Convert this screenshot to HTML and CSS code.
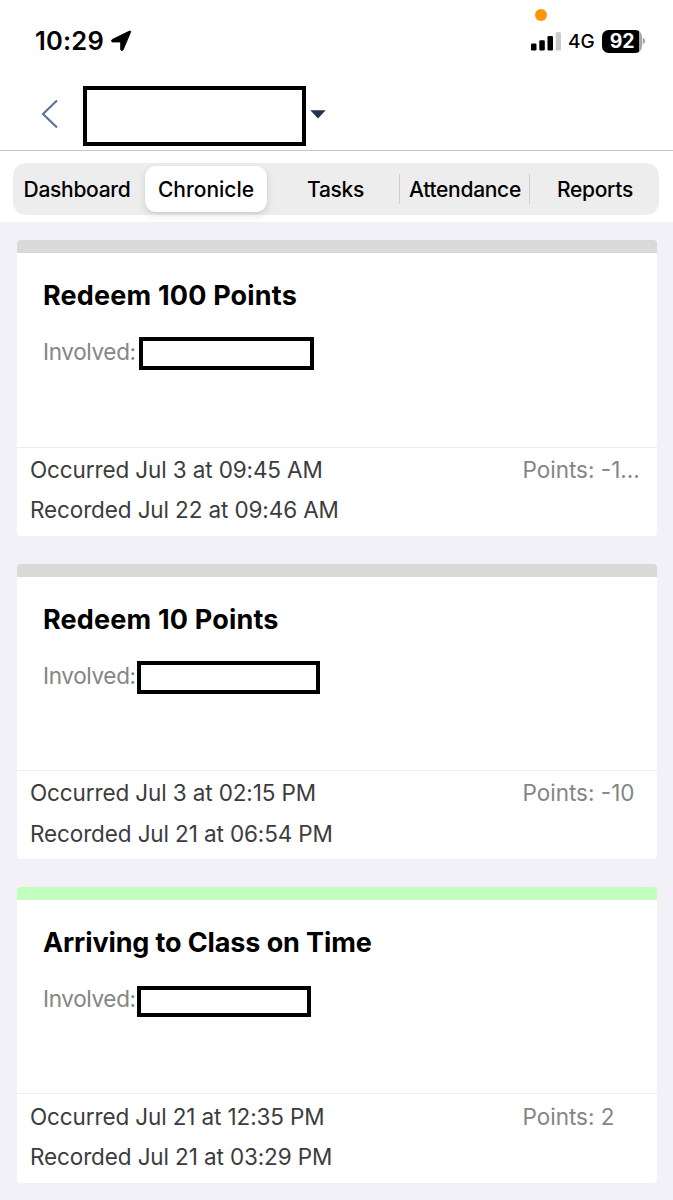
FILE: index.html
```html
<!DOCTYPE html>
<html lang="en">
<head>
<meta charset="utf-8">
<title>Chronicle</title>
<link rel="stylesheet" href="styles.css">
</head>
<body>
<header class="top">
  <div class="status">
    <div class="clock">
      <span class="time">10:29</span>
      <svg class="location" width="22" height="22" viewBox="0 0 22 22"><path d="M20.600 2.200 13.200 19.800c-.6 1.200-2.600.9-2.600-.5V12H2.800C1.200 12 .9 10.100 2.200 9.500L19.400 1.100c1-.5 1.700.1 1.200 1.100Z" stroke="#000" stroke-width=".8" stroke-linejoin="round"/></svg>
    </div>
    <div class="indicators">
      <span class="mic-dot"></span>
      <svg class="signal" width="30" height="20" viewBox="0 0 30 20"><rect x="0" y="12.500" width="5.500" height="7" rx="1.200"/><rect x="8.300" y="9.300" width="5.500" height="10.200" rx="1.200"/><rect x="16.500" y="5" width="5.500" height="14.500" rx="1.200"/><rect x="24.700" y="1.200" width="5.300" height="18.300" rx="1.200" fill="#cacaca"/></svg>
      <span class="network">4G</span>
      <span class="battery"><span class="level">92</span></span>
      <svg class="cap" width="4" height="8" viewBox="0 0 4 8"><path d="M.7.5Q3.300 1.800 3.300 4T.7 7.500Z" fill="#aaa"/></svg>
    </div>
  </div>
  <div class="nav">
    <svg class="back" width="18" height="30" viewBox="0 0 18 30"><path d="M16 1.500 2 15l14 13.500" fill="none" stroke="#5d7192" stroke-width="2.100"/></svg>
    <div class="student"></div>
    <svg class="caret" width="16" height="9" viewBox="0 0 16 9"><path d="M.3.300h15.400L8 8.500Z" fill="#1f3355"/></svg>
  </div>
</header>
<nav class="tabs-wrap">
  <div class="tabs">
    <span class="tab">Dashboard</span>
    <span class="tab active">Chronicle</span>
    <span class="tab">Tasks</span>
    <span class="tab divided">Attendance</span>
    <span class="tab divided">Reports</span>
  </div>
</nav>
<main class="feed">
  <article class="card">
    <div class="body">
      <h2 class="title">Redeem 100 Points</h2>
      <div class="involved"><span class="label">Involved:</span><span class="name first"></span></div>
    </div>
    <footer class="meta">
      <div class="dates"><span>Occurred Jul 3 at 09:45 AM</span><span>Recorded Jul 22 at 09:46 AM</span></div>
      <span class="points">Points: -1...</span>
    </footer>
  </article>
  <article class="card">
    <div class="body">
      <h2 class="title">Redeem 10 Points</h2>
      <div class="involved"><span class="label">Involved:</span><span class="name second"></span></div>
    </div>
    <footer class="meta">
      <div class="dates"><span>Occurred Jul 3 at 02:15 PM</span><span>Recorded Jul 21 at 06:54 PM</span></div>
      <span class="points">Points: -10</span>
    </footer>
  </article>
  <article class="card positive">
    <div class="body">
      <h2 class="title">Arriving to Class on Time</h2>
      <div class="involved"><span class="label">Involved:</span><span class="name third"></span></div>
    </div>
    <footer class="meta">
      <div class="dates"><span>Occurred Jul 21 at 12:35 PM</span><span>Recorded Jul 21 at 03:29 PM</span></div>
      <span class="points">Points: 2</span>
    </footer>
  </article>
</main>
</body>
</html>
```
FILE: styles.css
```css
* { box-sizing: border-box; }
body {
  margin: 0;
  height: 1200px;
  overflow: hidden;
  background: #f2f1f7;
  color: #000;
  font-family: Inter, "Liberation Sans", sans-serif;
}
svg { display: block; flex: none; }

.top { height: 151px; background: #fff; border-bottom: 1.500px solid #c8c8c8; }
.status { height: 82px; display: flex; justify-content: space-between; padding: 0 27px 0 35px; align-items: center; }
.clock { display: flex; align-items: center; gap: 6px; }
.time { font-size: 25.500px; font-weight: 600; line-height: 30px; letter-spacing: .2px; }
.indicators { position: relative; display: flex; align-items: center; }
.mic-dot { position: absolute; left: 4px; top: -19px; width: 12px; height: 12px; border-radius: 50%; background: #ff9500; }
.network { margin-left: 7px; width: 27px; font-size: 19px; font-weight: 500; line-height: 26px; padding-top: 1px; margin-bottom: -1px; white-space: nowrap; }
.battery {
  margin-left: 7px; width: 40px; height: 23px; border-radius: 6.500px;
  background: linear-gradient(90deg, #000 36.500px, #a6a6a6 36.500px);
}
.level { display: block; width: 40px; text-align: center; color: #fff; font-size: 19.500px; font-weight: 700; line-height: 23px; letter-spacing: -.3px; }

.nav { display: flex; padding-left: 41px; }
.back { margin-top: 17px; }
.student { margin: 4px 0 0 24px; width: 223px; height: 60px; border: 4px solid #000; }
.caret { margin: 28px 0 0 4px; }

.tabs-wrap { height: 71px; padding: 12px 14px 0 13px; background: #fff; }
.tabs { height: 52px; padding: 3px; display: grid; grid-template-columns: 126px 128px 129px 130px 1fr; border-radius: 13px; background: #ededed; }
.tab { display: flex; align-items: center; justify-content: center; font-size: 21px; font-weight: 500; letter-spacing: -.3px; white-space: nowrap; }
.tab:first-child { padding-right: 4px; }
.tab:nth-child(3) { padding-left: 2px; }
.tab:nth-child(4) { padding-left: 2px; }
.tab:last-child { padding-left: 5px; }
.active { margin: 0 3px; border-radius: 11px; background: #fff; letter-spacing: 0; box-shadow: 0 3px 8px rgba(0,0,0,.12), 0 1px 2px rgba(0,0,0,.05); }
.divided { background: linear-gradient(#d0d0d2, #d0d0d2) 0 50% / 1px 30px no-repeat; }

.feed { padding: 18px 16px 0 17px; display: grid; gap: 28px; }
.card { height: 295.500px; border-top: 13px solid #d9d9d9; border-radius: 4px; background: #fff; overflow: hidden; }
.positive { border-top-color: #c0ffbe; }
.body { height: 194px; padding: 26px 26px 0; border-bottom: 1px solid #ececf0; }
.card:first-child .body { height: 195px; }
.card:first-child .meta { padding-top: 1.500px; }
.title { margin: 0; font-size: 27px; font-weight: 700; line-height: 34px; letter-spacing: .18px; white-space: nowrap; }
.positive .title { letter-spacing: -.12px; }
.involved { display: flex; margin-top: 23px; height: 36px; color: #858585; font-size: 22.500px; }
.label { width: 96px; line-height: 32px; letter-spacing: -.35px; white-space: nowrap; }
.name { border: 4px solid #000; }
.first { width: 175px; height: 33px; margin-top: 1px; }
.second { width: 183px; height: 33px; margin: 1px 0 0 -2px; }
.third { width: 174px; height: 31px; margin: 3px 0 0 -2px; }
.meta { display: flex; padding: 2.500px 0 0 13px; font-size: 22.500px; line-height: 40.700px; white-space: nowrap; }
.dates { display: flex; flex-direction: column; width: 492.500px; color: #3c3c3c; letter-spacing: -.12px; }
.points { color: #858585; }
```
